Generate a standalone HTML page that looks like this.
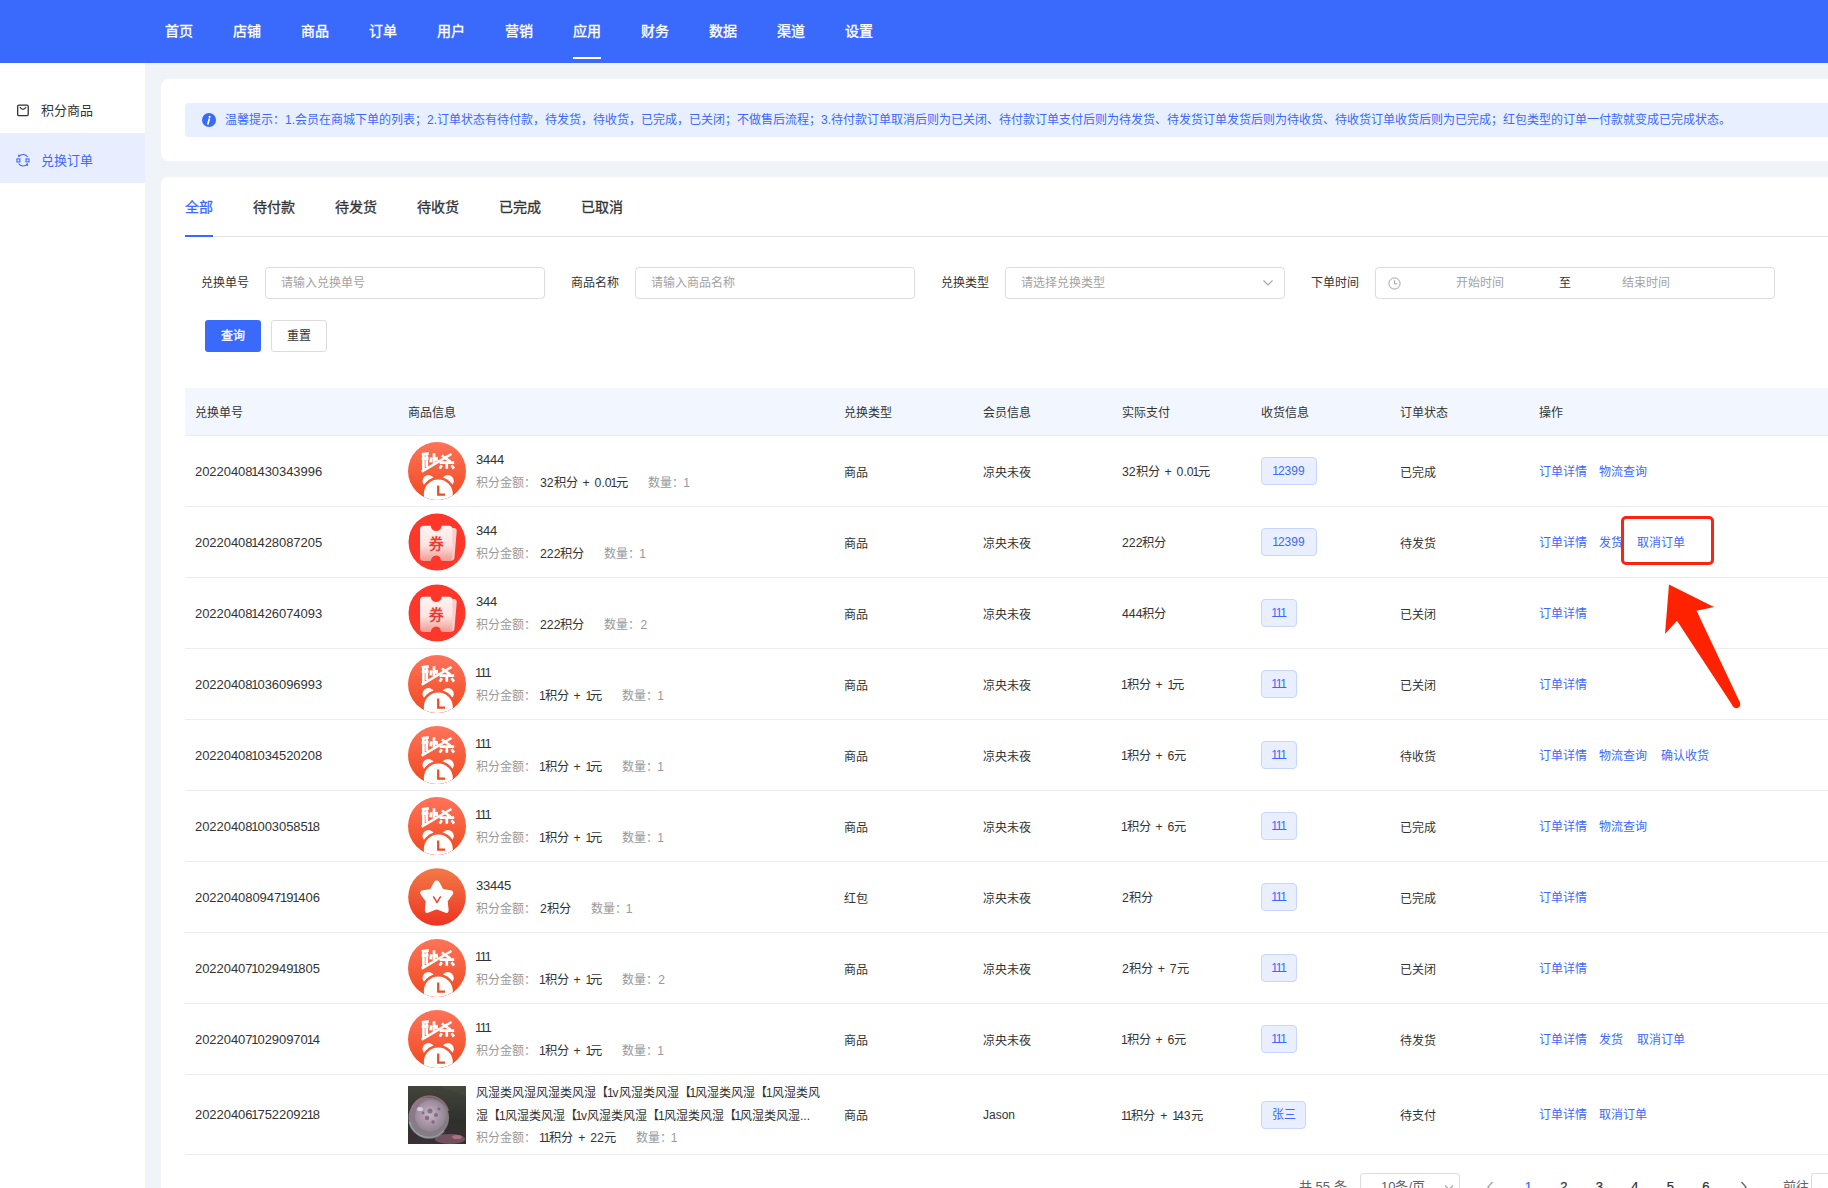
<!DOCTYPE html>
<html lang="zh-CN">
<head>
<meta charset="utf-8">
<style>
*{box-sizing:border-box;margin:0;padding:0}
html,body{width:1828px;height:1188px;overflow:hidden}
body{font-family:"Liberation Sans",sans-serif;background:#f0f4f8;position:relative;color:#333}
.abs{position:absolute}
.hdr{position:absolute;left:0;top:0;width:1828px;height:63px;background:#3a6afc}
.nav{position:absolute;top:0;height:63px;line-height:63px;color:#fff;font-size:14px;-webkit-text-stroke:0.35px #fff;white-space:nowrap}
.nav.on:after{content:"";position:absolute;left:0;width:28px;top:57px;height:2px;background:#fff}
.side{position:absolute;left:0;top:63px;width:145px;height:1125px;background:#fff}
.sitem{position:absolute;left:0;width:145px;height:50px;line-height:55px;font-size:13px;color:#333;padding-left:41px}
.sitem.on{background:#e8eeff;color:#3a6afc}
.sitem svg{position:absolute;left:16px;top:20px}
.card{position:absolute;background:#fff;border-radius:8px}
.alert{position:absolute;left:185px;top:103px;width:1700px;height:34px;background:#e8efff;border-radius:4px;color:#3a6afc;font-size:12px;line-height:34px;padding-left:40px;white-space:nowrap}
.alert .ic{position:absolute;left:17px;top:10px;width:14px;height:14px;border-radius:50%;background:#3a6afc;line-height:0}.alert .ic svg{display:block}
.tab{position:absolute;top:190px;height:34px;line-height:34px;font-size:14px;-webkit-text-stroke:0.3px #333;color:#333;white-space:nowrap}
.tab.on{color:#3a6afc;-webkit-text-stroke:0.3px #3a6afc}
.lbl{position:absolute;top:267px;height:32px;line-height:32px;font-size:12px;color:#333;white-space:nowrap}
.inp{position:absolute;top:267px;height:32px;width:280px;border:1px solid #dcdcdc;border-radius:4px;font-size:12px;color:#a3a3a3;line-height:30px;padding-left:15px;white-space:nowrap;background:#fff}
.btn{position:absolute;top:320px;width:56px;height:32px;border-radius:3px;font-size:12px;line-height:32px;text-align:center}
</style><style>
.th{position:absolute;top:388px;height:47px;line-height:50px;font-size:12px;color:#333;white-space:nowrap}
.td{position:absolute;display:flex;align-items:center;font-size:12px;color:#333;white-space:nowrap}
.td.no{font-size:13px;letter-spacing:-0.05px}
.pb{display:block}
.pt{font-size:13px;line-height:19px;height:19px;margin-bottom:4px;letter-spacing:-0.2px}
.pt2{font-size:12px;line-height:23px;white-space:nowrap}
.pi{font-size:12px;line-height:20px;height:20px}
.pi .g{color:#999}
.pi .v{color:#333;margin-left:4px;font-size:12.25px;word-spacing:1.5px}
.pi .q{margin-left:20px}
.tag{display:inline-block;height:28px;line-height:26px;text-align:center;border:1px solid #c8d6ff;background:#e9efff;color:#3a6afc;border-radius:4px;font-size:12px}
.n1{font-style:normal;margin:0 -1.1px}.n1b{font-style:normal;margin:0 -2.2px 0 0}
.lk{color:#3a6afc;margin-right:12px;position:relative;top:-1px}
.pg{position:absolute;top:1173px;height:28px;line-height:28px;font-size:13px;color:#606266;white-space:nowrap}
.pgn{width:35.5px;text-align:center;color:#303133;-webkit-text-stroke:0.25px #303133}
.pgn.on{color:#3a6afc;-webkit-text-stroke:0.25px #3a6afc}
.psel{border:1px solid #dcdcdc;border-radius:3px;background:#fff;font-size:13px;color:#606266;line-height:26px;padding-left:20px}
</style>
</head>
<body>
<div class="hdr"></div>
<div class="nav" style="left:165px">首页</div>
<div class="nav" style="left:233px">店铺</div>
<div class="nav" style="left:301px">商品</div>
<div class="nav" style="left:369px">订单</div>
<div class="nav" style="left:437px">用户</div>
<div class="nav" style="left:505px">营销</div>
<div class="nav on" style="left:573px">应用</div>
<div class="nav" style="left:641px">财务</div>
<div class="nav" style="left:709px">数据</div>
<div class="nav" style="left:777px">渠道</div>
<div class="nav" style="left:845px">设置</div>

<div class="side">
  <div class="sitem" style="top:20px"><svg width="14" height="14" viewBox="0 0 14 14" style="top:20.7px"><rect x="1.65" y="1.15" width="10.6" height="10.5" rx="1.3" fill="none" stroke="#333" stroke-width="1.3"/><path d="M3.9 3.2 Q7 7.4 10.1 3.2" fill="none" stroke="#333" stroke-width="1.2"/></svg>积分商品</div>
  <div class="sitem on" style="top:70px"><svg width="14" height="14" viewBox="0 0 14 14" style="top:19.5px"><rect x="0.9" y="5.9" width="3" height="3" fill="none" stroke="#3a6afc" stroke-width="1.1"/><rect x="10" y="5.9" width="3" height="3" fill="none" stroke="#3a6afc" stroke-width="1.1"/><path d="M3 3.3 A5.4 5.4 0 0 1 11.6 3.9" fill="none" stroke="#3a6afc" stroke-width="1.1"/><path d="M1.9 1.5 L4.6 2.2 L2.6 4.6 Z" fill="#3a6afc"/><path d="M2.6 10.5 A5.4 5.4 0 0 0 11.2 11.1" fill="none" stroke="#3a6afc" stroke-width="1.1"/><path d="M12.3 12.9 L9.6 12.2 L11.6 9.8 Z" fill="#3a6afc"/></svg>兑换订单</div>
</div>

<div class="card" style="left:161px;top:79px;width:1700px;height:82px"></div>
<div class="alert"><span class="ic"><svg width="14" height="14" viewBox="0 0 14 14"><circle cx="7.6" cy="3.9" r="1.05" fill="#fff"/><path d="M7.3 6 L5.9 10.9" stroke="#fff" stroke-width="1.7" stroke-linecap="round"/></svg></span>温馨提示：1.会员在商城下单的列表；2.订单状态有待付款，待发货，待收货，已完成，已关闭；不做售后流程；3.待付款订单取消后则为已关闭、待付款订单支付后则为待发货、待发货订单发货后则为待收货、待收货订单收货后则为已完成；红包类型的订单一付款就变成已完成状态。</div>

<div class="card" style="left:161px;top:177px;width:1700px;height:1100px"></div>
<div class="abs" style="left:185px;top:236px;width:1700px;height:1px;background:#e4e4e4"></div>
<div class="tab on" style="left:185px">全部</div>
<div class="abs" style="left:185px;top:235px;width:28px;height:2px;background:#3a6afc"></div>
<div class="tab" style="left:253px">待付款</div>
<div class="tab" style="left:335px">待发货</div>
<div class="tab" style="left:417px">待收货</div>
<div class="tab" style="left:499px">已完成</div>
<div class="tab" style="left:581px">已取消</div>

<div class="lbl" style="left:201px">兑换单号</div>
<div class="inp" style="left:265px">请输入兑换单号</div>
<div class="lbl" style="left:571px">商品名称</div>
<div class="inp" style="left:635px">请输入商品名称</div>
<div class="lbl" style="left:941px">兑换类型</div>
<div class="inp" style="left:1005px">请选择兑换类型<svg class="abs" style="left:256px;top:11px" width="12" height="8" viewBox="0 0 12 8"><path d="M1.5 1.5 L6 6 L10.5 1.5" stroke="#a3a3a3" stroke-width="1.1" fill="none"/></svg></div>
<div class="lbl" style="left:1311px">下单时间</div>
<div class="inp" style="left:1375px;width:400px"><svg class="abs" style="left:12px;top:9px" width="13" height="13" viewBox="0 0 13 13"><circle cx="6.5" cy="6.5" r="5.6" fill="none" stroke="#a3a3a3" stroke-width="1"/><path d="M6.5 3.3 V6.8 H9.2" fill="none" stroke="#a3a3a3" stroke-width="1"/></svg><span class="abs" style="left:80px;top:0">开始时间</span><span class="abs" style="left:183px;top:0;color:#333">至</span><span class="abs" style="left:246px;top:0">结束时间</span></div>

<div class="btn" style="left:205px;background:#3a6afc;color:#fff;-webkit-text-stroke:0.3px #fff">查询</div>
<div class="btn" style="left:271px;border:1px solid #dcdcdc;line-height:30px;color:#333;background:#fff">重置</div>

<svg width="0" height="0" style="position:absolute">
<defs>
<linearGradient id="gms" x1="0" y1="0" x2="0" y2="58" gradientUnits="userSpaceOnUse"><stop offset="0" stop-color="#ff735a"/><stop offset="1" stop-color="#ef4a1f"/></linearGradient>
<linearGradient id="gst" x1="0" y1="0" x2="0" y2="58" gradientUnits="userSpaceOnUse"><stop offset="0" stop-color="#f27a48"/><stop offset="1" stop-color="#ee3322"/></linearGradient>
<linearGradient id="gtk" x1="0" y1="0" x2="0" y2="1"><stop offset="0" stop-color="#fff4f2"/><stop offset="0.55" stop-color="#fde3e0"/><stop offset="1" stop-color="#f29a92"/></linearGradient>
<radialGradient id="gball" cx="0.45" cy="0.45" r="0.6"><stop offset="0" stop-color="#c9b6c4"/><stop offset="0.6" stop-color="#a590a4"/><stop offset="0.85" stop-color="#8d8a92"/><stop offset="1" stop-color="#6c6a70"/></radialGradient>
<linearGradient id="gbg" x1="0" y1="0" x2="0" y2="1"><stop offset="0" stop-color="#42453a"/><stop offset="0.6" stop-color="#2e302c"/><stop offset="1" stop-color="#3b2f35"/></linearGradient>
<clipPath id="cms"><circle cx="29" cy="29" r="29"/></clipPath>
<symbol id="ms" viewBox="0 0 58 58">
<circle cx="29" cy="29" r="29" fill="url(#gms)"/>
<g stroke="#fff" stroke-width="2.7" fill="none" stroke-linecap="butt">
<path d="M13.7 12.3 L20.8 11.3 M15.4 13.4 V28.6 M13.7 16.9 L20.5 16.4 M18.8 13.2 V25 M26 11.2 V21.4 M23.2 15.4 L22.7 20.3 M28.4 14.8 L28.9 18.8"/>
<path d="M33.8 13.5 L42.4 19.6 M31.6 20.6 H46.2 M38.8 21.2 V26.8 M33.8 23.2 L31.7 26.6 M43.5 23.2 L46 26.6"/>
<path d="M13.7 29.6 L43.5 12" stroke-width="2.5"/>
</g>
<g clip-path="url(#cms)">
<circle cx="20.5" cy="39" r="6" fill="#fff"/><circle cx="39.8" cy="39" r="6" fill="#fff"/>
<circle cx="30.3" cy="52" r="17" fill="url(#gms)"/>
<circle cx="30.3" cy="52" r="14.5" fill="#fff"/>
</g>
<path d="M30.2 43.5 V52.6 H37" stroke="#ef4a1f" stroke-width="2.2" fill="none"/>
</symbol>
<symbol id="cp" viewBox="0 0 58 58">
<circle cx="29" cy="29" r="28.5" fill="#fd382b"/>
<path d="M34 15 h10.5 a3.2 3.2 0 0 1 3.2 3.2 v26 a3.2 3.2 0 0 1 -3.2 3.2 h-10.5 z" fill="#f7cfcb" transform="rotate(5 44 30)"/>
<path d="M15.5 12.7 h7.3 a5.4 5.4 0 0 0 10.8 0 h7.3 a3.5 3.5 0 0 1 3.5 3.5 v28.3 a3.5 3.5 0 0 1 -3.5 3.5 h-7.3 a5.4 5.4 0 0 0 -10.8 0 h-7.3 a3.5 3.5 0 0 1 -3.5 -3.5 v-28.3 a3.5 3.5 0 0 1 3.5 -3.5 z" fill="url(#gtk)"/>
<text x="28.2" y="36" font-size="14.5" font-weight="bold" fill="#ef3a2e" text-anchor="middle" font-family="Liberation Sans">券</text>
</symbol>
<symbol id="st" viewBox="0 0 58 58">
<circle cx="29" cy="29" r="28.8" fill="url(#gst)"/>
<path d="M28.7 13.1 Q30.2 12.8 31.2 15 L34.7 21.6 L42.5 22.9 Q46 23.6 44 26.5 L39.1 33.1 L40 41.5 Q40.3 45.5 37 44 L28.7 40.8 L20.4 44 Q17.3 45.5 17.5 41.5 L18.3 33.1 L13.4 26.5 Q11.5 23.6 15 22.9 L22.7 21.6 L26.2 15 Q27.2 12.8 28.7 13.1 Z" fill="#fff" stroke="#fff" stroke-width="1.2" stroke-linejoin="round"/>
<path d="M25.3 28.3 L29 34.4 L32.7 28.3" stroke="#ef3b25" stroke-width="1.4" fill="none"/>
</symbol>
<symbol id="ph" viewBox="0 0 58 58">
<rect width="58" height="58" fill="url(#gbg)"/>
<path d="M58 10 L30 0 L58 0 Z" fill="#4a4c40" opacity="0.5"/>
<ellipse cx="42" cy="53" rx="15" ry="5" fill="#8c5e70" opacity="0.7"/>
<ellipse cx="49" cy="51" rx="5" ry="2" fill="#c08090" opacity="0.7"/>
<circle cx="20.7" cy="31.7" r="20.3" fill="#8a7a86"/>
<path d="M1.5 36 A20 20 0 0 0 36 45" stroke="#9cc4c4" stroke-width="2.2" fill="none" opacity="0.5"/>
<path d="M4 22 A19 19 0 0 1 40 25" stroke="#a07880" stroke-width="2" fill="none" opacity="0.8"/>
<circle cx="23" cy="30" r="16" fill="url(#gball)"/>
<g fill="#6e6070" opacity="0.75"><circle cx="22" cy="25" r="2.5"/><circle cx="28" cy="29" r="2"/><circle cx="19" cy="32" r="2.2"/><circle cx="25" cy="36" r="1.8"/><circle cx="31" cy="23" r="1.5"/><circle cx="15" cy="27" r="1.4"/></g>
<ellipse cx="12" cy="23" rx="3" ry="2" fill="#d8e0f0" opacity="0.8"/>
</symbol>
</defs></svg>
<div class="abs" style="left:185px;top:388px;width:1700px;height:47px;background:#f2f6fe"></div>
<div class="abs" style="left:185px;top:435px;width:1700px;height:1px;background:#ececec"></div>
<div class="th" style="left:195px">兑换单号</div>
<div class="th" style="left:408px">商品信息</div>
<div class="th" style="left:844px">兑换类型</div>
<div class="th" style="left:983px">会员信息</div>
<div class="th" style="left:1122px">实际支付</div>
<div class="th" style="left:1261px">收货信息</div>
<div class="th" style="left:1400px">订单状态</div>
<div class="th" style="left:1539px">操作</div>
<div class="abs" style="left:185px;top:506px;width:1700px;height:1px;background:#ececec"></div>
<div class="td no" style="left:195px;top:436px;height:70px;"><span>20220408<i class="n1">1</i>430343996</span></div>
<svg class="abs" style="left:408px;top:442px" width="58" height="58"><use href="#ms"/></svg>
<div class="td prod" style="left:476px;top:436px;height:70px;"><span><div class="pb"><div class="pt">3444</div><div class="pi"><span class="g">积分金额：</span><span class="v">32积分 + 0.0<i class="n1">1</i>元</span><span class="g q">数量：<i class="n1">1</i></span></div></div></span></div>
<div class="td" style="left:844px;top:436px;height:70px;"><span>商品</span></div>
<div class="td" style="left:983px;top:436px;height:70px;"><span>凉央未夜</span></div>
<div class="td" style="left:1122px;top:436px;height:70px;font-size:12.25px;word-spacing:1.5px"><span>32积分 + 0.0<i class="n1">1</i>元</span></div>
<div class="td" style="left:1261px;top:436px;height:70px;"><span><span class="tag" style="width:56px"><i class="n1">1</i>2399</span></span></div>
<div class="td" style="left:1400px;top:436px;height:70px;"><span>已完成</span></div>
<div class="td" style="left:1539px;top:436px;height:70px;"><span><span class="lk">订单详情</span><span class="lk">物流查询</span></span></div>
<div class="abs" style="left:185px;top:577px;width:1700px;height:1px;background:#ececec"></div>
<div class="td no" style="left:195px;top:507px;height:70px;"><span>20220408<i class="n1">1</i>428087205</span></div>
<svg class="abs" style="left:408px;top:513px" width="58" height="58"><use href="#cp"/></svg>
<div class="td prod" style="left:476px;top:507px;height:70px;"><span><div class="pb"><div class="pt">344</div><div class="pi"><span class="g">积分金额：</span><span class="v">222积分</span><span class="g q">数量：<i class="n1">1</i></span></div></div></span></div>
<div class="td" style="left:844px;top:507px;height:70px;"><span>商品</span></div>
<div class="td" style="left:983px;top:507px;height:70px;"><span>凉央未夜</span></div>
<div class="td" style="left:1122px;top:507px;height:70px;font-size:12.25px;word-spacing:1.5px"><span>222积分</span></div>
<div class="td" style="left:1261px;top:507px;height:70px;"><span><span class="tag" style="width:56px"><i class="n1">1</i>2399</span></span></div>
<div class="td" style="left:1400px;top:507px;height:70px;"><span>待发货</span></div>
<div class="td" style="left:1539px;top:507px;height:70px;"><span><span class="lk">订单详情</span><span class="lk">发货</span><span class="lk" style="margin-left:2px">取消订单</span></span></div>
<div class="abs" style="left:185px;top:648px;width:1700px;height:1px;background:#ececec"></div>
<div class="td no" style="left:195px;top:578px;height:70px;"><span>20220408<i class="n1">1</i>426074093</span></div>
<svg class="abs" style="left:408px;top:584px" width="58" height="58"><use href="#cp"/></svg>
<div class="td prod" style="left:476px;top:578px;height:70px;"><span><div class="pb"><div class="pt">344</div><div class="pi"><span class="g">积分金额：</span><span class="v">222积分</span><span class="g q">数量：2</span></div></div></span></div>
<div class="td" style="left:844px;top:578px;height:70px;"><span>商品</span></div>
<div class="td" style="left:983px;top:578px;height:70px;"><span>凉央未夜</span></div>
<div class="td" style="left:1122px;top:578px;height:70px;font-size:12.25px;word-spacing:1.5px"><span>444积分</span></div>
<div class="td" style="left:1261px;top:578px;height:70px;"><span><span class="tag" style="width:36px"><i class="n1">1</i><i class="n1">1</i><i class="n1">1</i></span></span></div>
<div class="td" style="left:1400px;top:578px;height:70px;"><span>已关闭</span></div>
<div class="td" style="left:1539px;top:578px;height:70px;"><span><span class="lk">订单详情</span></span></div>
<div class="abs" style="left:185px;top:719px;width:1700px;height:1px;background:#ececec"></div>
<div class="td no" style="left:195px;top:649px;height:70px;"><span>20220408<i class="n1">1</i>036096993</span></div>
<svg class="abs" style="left:408px;top:655px" width="58" height="58"><use href="#ms"/></svg>
<div class="td prod" style="left:476px;top:649px;height:70px;"><span><div class="pb"><div class="pt"><i class="n1">1</i><i class="n1">1</i><i class="n1">1</i></div><div class="pi"><span class="g">积分金额：</span><span class="v"><i class="n1">1</i>积分 + <i class="n1b">1</i>元</span><span class="g q">数量：<i class="n1">1</i></span></div></div></span></div>
<div class="td" style="left:844px;top:649px;height:70px;"><span>商品</span></div>
<div class="td" style="left:983px;top:649px;height:70px;"><span>凉央未夜</span></div>
<div class="td" style="left:1122px;top:649px;height:70px;font-size:12.25px;word-spacing:1.5px"><span><i class="n1">1</i>积分 + <i class="n1b">1</i>元</span></div>
<div class="td" style="left:1261px;top:649px;height:70px;"><span><span class="tag" style="width:36px"><i class="n1">1</i><i class="n1">1</i><i class="n1">1</i></span></span></div>
<div class="td" style="left:1400px;top:649px;height:70px;"><span>已关闭</span></div>
<div class="td" style="left:1539px;top:649px;height:70px;"><span><span class="lk">订单详情</span></span></div>
<div class="abs" style="left:185px;top:790px;width:1700px;height:1px;background:#ececec"></div>
<div class="td no" style="left:195px;top:720px;height:70px;"><span>20220408<i class="n1">1</i>034520208</span></div>
<svg class="abs" style="left:408px;top:726px" width="58" height="58"><use href="#ms"/></svg>
<div class="td prod" style="left:476px;top:720px;height:70px;"><span><div class="pb"><div class="pt"><i class="n1">1</i><i class="n1">1</i><i class="n1">1</i></div><div class="pi"><span class="g">积分金额：</span><span class="v"><i class="n1">1</i>积分 + <i class="n1b">1</i>元</span><span class="g q">数量：<i class="n1">1</i></span></div></div></span></div>
<div class="td" style="left:844px;top:720px;height:70px;"><span>商品</span></div>
<div class="td" style="left:983px;top:720px;height:70px;"><span>凉央未夜</span></div>
<div class="td" style="left:1122px;top:720px;height:70px;font-size:12.25px;word-spacing:1.5px"><span><i class="n1">1</i>积分 + 6元</span></div>
<div class="td" style="left:1261px;top:720px;height:70px;"><span><span class="tag" style="width:36px"><i class="n1">1</i><i class="n1">1</i><i class="n1">1</i></span></span></div>
<div class="td" style="left:1400px;top:720px;height:70px;"><span>待收货</span></div>
<div class="td" style="left:1539px;top:720px;height:70px;"><span><span class="lk">订单详情</span><span class="lk">物流查询</span><span class="lk" style="margin-left:2px">确认收货</span></span></div>
<div class="abs" style="left:185px;top:861px;width:1700px;height:1px;background:#ececec"></div>
<div class="td no" style="left:195px;top:791px;height:70px;"><span>20220408<i class="n1">1</i>0030585<i class="n1">1</i>8</span></div>
<svg class="abs" style="left:408px;top:797px" width="58" height="58"><use href="#ms"/></svg>
<div class="td prod" style="left:476px;top:791px;height:70px;"><span><div class="pb"><div class="pt"><i class="n1">1</i><i class="n1">1</i><i class="n1">1</i></div><div class="pi"><span class="g">积分金额：</span><span class="v"><i class="n1">1</i>积分 + <i class="n1b">1</i>元</span><span class="g q">数量：<i class="n1">1</i></span></div></div></span></div>
<div class="td" style="left:844px;top:791px;height:70px;"><span>商品</span></div>
<div class="td" style="left:983px;top:791px;height:70px;"><span>凉央未夜</span></div>
<div class="td" style="left:1122px;top:791px;height:70px;font-size:12.25px;word-spacing:1.5px"><span><i class="n1">1</i>积分 + 6元</span></div>
<div class="td" style="left:1261px;top:791px;height:70px;"><span><span class="tag" style="width:36px"><i class="n1">1</i><i class="n1">1</i><i class="n1">1</i></span></span></div>
<div class="td" style="left:1400px;top:791px;height:70px;"><span>已完成</span></div>
<div class="td" style="left:1539px;top:791px;height:70px;"><span><span class="lk">订单详情</span><span class="lk">物流查询</span></span></div>
<div class="abs" style="left:185px;top:932px;width:1700px;height:1px;background:#ececec"></div>
<div class="td no" style="left:195px;top:862px;height:70px;"><span>202204080947<i class="n1">1</i>9<i class="n1">1</i>406</span></div>
<svg class="abs" style="left:408px;top:868px" width="58" height="58"><use href="#st"/></svg>
<div class="td prod" style="left:476px;top:862px;height:70px;"><span><div class="pb"><div class="pt">33445</div><div class="pi"><span class="g">积分金额：</span><span class="v">2积分</span><span class="g q">数量：<i class="n1">1</i></span></div></div></span></div>
<div class="td" style="left:844px;top:862px;height:70px;"><span>红包</span></div>
<div class="td" style="left:983px;top:862px;height:70px;"><span>凉央未夜</span></div>
<div class="td" style="left:1122px;top:862px;height:70px;font-size:12.25px;word-spacing:1.5px"><span>2积分</span></div>
<div class="td" style="left:1261px;top:862px;height:70px;"><span><span class="tag" style="width:36px"><i class="n1">1</i><i class="n1">1</i><i class="n1">1</i></span></span></div>
<div class="td" style="left:1400px;top:862px;height:70px;"><span>已完成</span></div>
<div class="td" style="left:1539px;top:862px;height:70px;"><span><span class="lk">订单详情</span></span></div>
<div class="abs" style="left:185px;top:1003px;width:1700px;height:1px;background:#ececec"></div>
<div class="td no" style="left:195px;top:933px;height:70px;"><span>20220407<i class="n1">1</i>02949<i class="n1">1</i>805</span></div>
<svg class="abs" style="left:408px;top:939px" width="58" height="58"><use href="#ms"/></svg>
<div class="td prod" style="left:476px;top:933px;height:70px;"><span><div class="pb"><div class="pt"><i class="n1">1</i><i class="n1">1</i><i class="n1">1</i></div><div class="pi"><span class="g">积分金额：</span><span class="v"><i class="n1">1</i>积分 + <i class="n1b">1</i>元</span><span class="g q">数量：2</span></div></div></span></div>
<div class="td" style="left:844px;top:933px;height:70px;"><span>商品</span></div>
<div class="td" style="left:983px;top:933px;height:70px;"><span>凉央未夜</span></div>
<div class="td" style="left:1122px;top:933px;height:70px;font-size:12.25px;word-spacing:1.5px"><span>2积分 + 7元</span></div>
<div class="td" style="left:1261px;top:933px;height:70px;"><span><span class="tag" style="width:36px"><i class="n1">1</i><i class="n1">1</i><i class="n1">1</i></span></span></div>
<div class="td" style="left:1400px;top:933px;height:70px;"><span>已关闭</span></div>
<div class="td" style="left:1539px;top:933px;height:70px;"><span><span class="lk">订单详情</span></span></div>
<div class="abs" style="left:185px;top:1074px;width:1700px;height:1px;background:#ececec"></div>
<div class="td no" style="left:195px;top:1004px;height:70px;"><span>20220407<i class="n1">1</i>0290970<i class="n1">1</i>4</span></div>
<svg class="abs" style="left:408px;top:1010px" width="58" height="58"><use href="#ms"/></svg>
<div class="td prod" style="left:476px;top:1004px;height:70px;"><span><div class="pb"><div class="pt"><i class="n1">1</i><i class="n1">1</i><i class="n1">1</i></div><div class="pi"><span class="g">积分金额：</span><span class="v"><i class="n1">1</i>积分 + <i class="n1b">1</i>元</span><span class="g q">数量：<i class="n1">1</i></span></div></div></span></div>
<div class="td" style="left:844px;top:1004px;height:70px;"><span>商品</span></div>
<div class="td" style="left:983px;top:1004px;height:70px;"><span>凉央未夜</span></div>
<div class="td" style="left:1122px;top:1004px;height:70px;font-size:12.25px;word-spacing:1.5px"><span><i class="n1">1</i>积分 + 6元</span></div>
<div class="td" style="left:1261px;top:1004px;height:70px;"><span><span class="tag" style="width:36px"><i class="n1">1</i><i class="n1">1</i><i class="n1">1</i></span></span></div>
<div class="td" style="left:1400px;top:1004px;height:70px;"><span>待发货</span></div>
<div class="td" style="left:1539px;top:1004px;height:70px;"><span><span class="lk">订单详情</span><span class="lk">发货</span><span class="lk" style="margin-left:2px">取消订单</span></span></div>
<div class="abs" style="left:185px;top:1154px;width:1700px;height:1px;background:#ececec"></div>
<div class="td no" style="left:195px;top:1075px;height:79px;"><span>20220406<i class="n1">1</i>7522092<i class="n1">1</i>8</span></div>
<svg class="abs" style="left:408px;top:1086px" width="58" height="58"><use href="#ph"/></svg>
<div class="td prod" style="left:476px;top:1075px;height:79px;"><span><div class="pb"><div class="pt2">风湿类风湿风湿类风湿【<i class="n1">1</i>v风湿类风湿【<i class="n1">1</i>风湿类风湿【<i class="n1">1</i>风湿类风<br>湿【<i class="n1">1</i>风湿类风湿【<i class="n1">1</i>v风湿类风湿【<i class="n1">1</i>风湿类风湿【<i class="n1">1</i>风湿类风湿...</div><div class="pi"><span class="g">积分金额：</span><span class="v"><i class="n1">1</i><i class="n1">1</i>积分 + 22元</span><span class="g q">数量：<i class="n1">1</i></span></div></div></span></div>
<div class="td" style="left:844px;top:1075px;height:79px;"><span>商品</span></div>
<div class="td" style="left:983px;top:1075px;height:79px;"><span>Jason</span></div>
<div class="td" style="left:1122px;top:1075px;height:79px;font-size:12.25px;word-spacing:1.5px"><span><i class="n1">1</i><i class="n1">1</i>积分 + <i class="n1b">1</i>43元</span></div>
<div class="td" style="left:1261px;top:1075px;height:79px;"><span><span class="tag" style="width:45px">张三</span></span></div>
<div class="td" style="left:1400px;top:1075px;height:79px;"><span>待支付</span></div>
<div class="td" style="left:1539px;top:1075px;height:79px;"><span><span class="lk">订单详情</span><span class="lk">取消订单</span></span></div>
<div class="pg" style="left:1299px">共 55 条</div>
<div class="abs psel" style="left:1360px;top:1173px;width:100px;height:28px">10条/页<svg class="abs" style="left:83px;top:10px" width="10" height="8" viewBox="0 0 10 8"><path d="M1 1.5 L5 5.5 L9 1.5" stroke="#a3a3a3" stroke-width="1.1" fill="none"/></svg></div>
<svg class="abs" style="left:1484.5px;top:1180px" width="10" height="14" viewBox="0 0 10 14"><path d="M7.5 2 L3 7 L7.5 12" stroke="#a3a3a3" stroke-width="1.3" fill="none"/></svg>
<div class="pg pgn on" style="left:1510.5px">1</div>
<div class="pg pgn" style="left:1546px">2</div>
<div class="pg pgn" style="left:1581.5px">3</div>
<div class="pg pgn" style="left:1617px">4</div>
<div class="pg pgn" style="left:1652.5px">5</div>
<div class="pg pgn" style="left:1688px">6</div>
<svg class="abs" style="left:1739px;top:1180px" width="10" height="14" viewBox="0 0 10 14"><path d="M2.5 2 L7 7 L2.5 12" stroke="#606266" stroke-width="1.3" fill="none"/></svg>
<div class="pg" style="left:1783px">前往</div>
<div class="abs psel" style="left:1811px;top:1173px;width:50px;height:28px"></div>

<div class="abs" style="left:1621px;top:516px;width:93px;height:49px;border:3px solid #fa2414;border-radius:5px"></div>
<svg class="abs" style="left:0;top:0" width="1828" height="1188"><path d="M1669 584.5 L1714 607 L1696.6 610.7 L1740 702.5 Q1741 708 1736 708.2 Q1733 708 1731.9 704.6 L1677 620.7 L1665 634 Z" fill="#fe2200"/></svg>

</body>
</html>
